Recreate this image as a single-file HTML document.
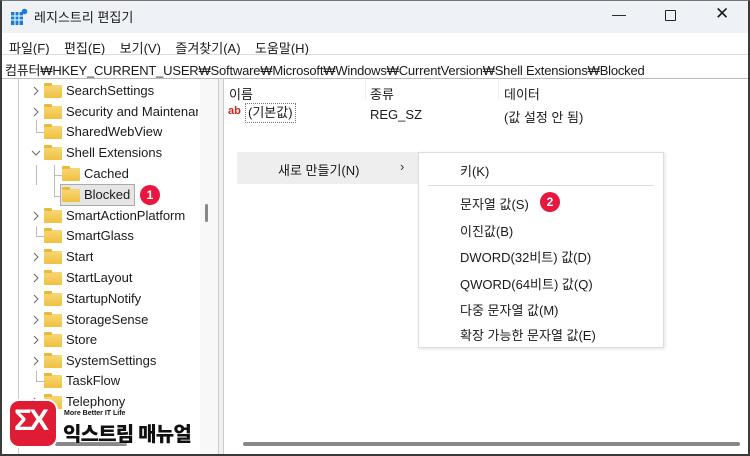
<!DOCTYPE html>
<html><head><meta charset="utf-8"><style>
*{margin:0;padding:0;box-sizing:border-box}
body{width:750px;height:456px;overflow:hidden;background:#fff;font-family:"Liberation Sans","Noto Sans CJK KR",sans-serif;font-size:13px;color:#1a1a1a;position:relative}
.abs{position:absolute;white-space:nowrap}
.win{position:absolute;left:0;top:0;width:750px;height:456px;border:2px solid #3a3a3a;border-top:1px solid #777;}
.title{position:absolute;left:0;top:0;width:750px;height:33px;background:#eef1f6}
.menu{position:absolute;left:0;top:33px;width:750px;height:22px;background:#fff;border-bottom:1px solid #ddd}
.addr{position:absolute;left:0;top:55px;width:750px;height:24px;background:#fff;border-bottom:1px solid #bbb}
.tree{position:absolute;left:2px;top:79px;width:216px;height:375px;background:#fff}
.vsb{position:absolute;left:200px;top:79px;width:18px;height:377px;background:#f8f8f8}
.split{position:absolute;left:218px;top:79px;width:6px;height:377px;background:#f0f0f0;border-left:1px solid #ccc;border-right:1px solid #ccc}
.row{position:absolute;height:20px;line-height:20px;font-size:13px;overflow:hidden}
.fold{position:absolute;width:18px;height:13px;background:linear-gradient(#f7d774,#f0c040);border-radius:1px}
.fold:before{content:"";position:absolute;left:0;top:-2px;width:8px;height:3px;background:#e9b93a;border-radius:1px 1px 0 0}
.chev{position:absolute;width:8px;height:10px}
.ctx{position:absolute;left:237px;top:152px;width:182px;height:32px;background:#eeeeee}
.sub{position:absolute;left:418px;top:152px;width:246px;height:196px;background:#fff;border:1px solid #ddd;box-shadow:1px 1px 3px rgba(0,0,0,.12)}
.badge{position:absolute;width:20px;height:20px;border-radius:10px;background:#e8173f;color:#fff;font-size:12px;font-weight:bold;text-align:center;line-height:20px}
</style></head><body>
<div class="title"></div>
<svg class="abs" style="left:10px;top:8px" width="18" height="18" viewBox="0 0 18 18"><rect x="1" y="4" width="12" height="13" fill="#1c7cd5"/><path d="M1 8h12M1 12h12M5 4v13M9 4v13" stroke="#fff" stroke-width="1"/><circle cx="14.5" cy="3.5" r="2.8" fill="#1c7cd5"/></svg>
<div class="abs" style="left:34px;top:7px;font-size:13px">레지스트리 편집기</div>
<div class="abs" style="left:612px;top:6px;font-size:14px">—</div>
<div class="abs" style="left:665px;top:10px;width:11px;height:11px;border:1.3px solid #222;border-radius:1px"></div>
<div class="abs" style="left:715px;top:4px;font-size:17px;font-weight:300">✕</div>
<div class="menu"></div>
<div class="abs" style="left:9px;top:38px">파일(F)&nbsp;&nbsp;&nbsp; 편집(E)&nbsp;&nbsp;&nbsp; 보기(V)&nbsp;&nbsp;&nbsp; 즐겨찾기(A)&nbsp;&nbsp;&nbsp; 도움말(H)</div>
<div class="addr"></div>
<div class="abs" style="left:5px;top:60px;letter-spacing:-0.2px">컴퓨터₩HKEY_CURRENT_USER₩Software₩Microsoft₩Windows₩CurrentVersion₩Shell Extensions₩Blocked</div>
<div class="tree"></div>
<div class="vsb"></div>
<div class="abs" style="left:205px;top:204px;width:3px;height:18px;background:#888;border-radius:2px"></div>
<div class="split"></div>
<div class="abs" style="left:18px;top:79px;width:1px;height:377px;background:#ccc"></div>
<div class="abs" style="left:36px;top:120px;width:1px;height:13px;background:#bbb"></div>
<div class="abs" style="left:36px;top:132px;width:8px;height:1px;background:#bbb"></div>
<div class="abs" style="left:36px;top:165px;width:1px;height:20px;background:#bbb"></div>
<div class="abs" style="left:54px;top:165px;width:1px;height:32px;background:#bbb"></div>
<div class="abs" style="left:54px;top:196px;width:8px;height:1px;background:#bbb"></div>
<div class="abs" style="left:54px;top:175px;width:8px;height:1px;background:#bbb"></div>
<div class="abs" style="left:36px;top:226px;width:1px;height:10px;background:#bbb"></div>
<div class="abs" style="left:36px;top:236px;width:8px;height:1px;background:#bbb"></div>
<div class="abs" style="left:36px;top:371px;width:1px;height:10px;background:#bbb"></div>
<div class="abs" style="left:36px;top:381px;width:8px;height:1px;background:#bbb"></div>

<svg width="0" height="0" style="position:absolute"><defs><path id="r" d="M2 1l4 4-4 4" fill="none" stroke="#666" stroke-width="1"/></defs></svg>
<div class="abs" style="left:0;top:0">
<svg class="chev" style="left:32px;top:86px"><use href="#r"/></svg><div class="fold" style="left:44px;top:85px"></div><div class="row" style="left:66px;top:81px">SearchSettings</div>
<svg class="chev" style="left:32px;top:107px"><use href="#r"/></svg><div class="fold" style="left:44px;top:106px"></div><div class="row" style="left:66px;top:102px;width:132px">Security and Maintenance</div>
<div class="fold" style="left:44px;top:126px"></div><div class="row" style="left:66px;top:122px">SharedWebView</div>
<svg class="abs" style="left:31px;top:149px" width="10" height="8"><path d="M1 2l4 4 4-4" fill="none" stroke="#666"/></svg><div class="fold" style="left:44px;top:147px"></div><div class="row" style="left:66px;top:143px">Shell Extensions</div>
<div class="fold" style="left:62px;top:168px"></div><div class="row" style="left:84px;top:164px">Cached</div>
<div class="abs" style="left:60px;top:184px;width:75px;height:22px;background:#e5e5e5;border:1px solid #aaa"></div>
<div class="fold" style="left:62px;top:189px"></div><div class="row" style="left:84px;top:185px">Blocked</div>
<svg class="chev" style="left:32px;top:211px"><use href="#r"/></svg><div class="fold" style="left:44px;top:210px"></div><div class="row" style="left:66px;top:206px">SmartActionPlatform</div>
<div class="fold" style="left:44px;top:230px"></div><div class="row" style="left:66px;top:226px">SmartGlass</div>
<svg class="chev" style="left:32px;top:252px"><use href="#r"/></svg><div class="fold" style="left:44px;top:251px"></div><div class="row" style="left:66px;top:247px">Start</div>
<svg class="chev" style="left:32px;top:273px"><use href="#r"/></svg><div class="fold" style="left:44px;top:272px"></div><div class="row" style="left:66px;top:268px">StartLayout</div>
<svg class="chev" style="left:32px;top:294px"><use href="#r"/></svg><div class="fold" style="left:44px;top:293px"></div><div class="row" style="left:66px;top:289px">StartupNotify</div>
<svg class="chev" style="left:32px;top:315px"><use href="#r"/></svg><div class="fold" style="left:44px;top:314px"></div><div class="row" style="left:66px;top:310px">StorageSense</div>
<svg class="chev" style="left:32px;top:335px"><use href="#r"/></svg><div class="fold" style="left:44px;top:334px"></div><div class="row" style="left:66px;top:330px">Store</div>
<svg class="chev" style="left:32px;top:356px"><use href="#r"/></svg><div class="fold" style="left:44px;top:355px"></div><div class="row" style="left:66px;top:351px">SystemSettings</div>
<div class="fold" style="left:44px;top:375px"></div><div class="row" style="left:66px;top:371px">TaskFlow</div>
<svg class="chev" style="left:32px;top:397px"><use href="#r"/></svg><div class="fold" style="left:44px;top:396px"></div><div class="row" style="left:66px;top:392px">Telephony</div>
</div>
<div class="badge" style="left:140px;top:185px">1</div>

<div class="abs" style="left:55px;top:442px;width:72px;height:4px;background:#888;border-radius:2px"></div>
<div class="abs" style="left:243px;top:442px;width:497px;height:4px;background:#888;border-radius:2px"></div>

<div class="abs" style="left:229px;top:84px">이름</div>
<div class="abs" style="left:365px;top:80px;width:1px;height:20px;background:#eee"></div>
<div class="abs" style="left:370px;top:84px">종류</div>
<div class="abs" style="left:498px;top:80px;width:1px;height:20px;background:#eee"></div>
<div class="abs" style="left:504px;top:84px">데이터</div>
<div class="abs" style="left:228px;top:105px;color:#c8281e;font-size:11px;font-weight:bold">ab</div>
<div class="abs" style="left:245px;top:103px;border:1px dotted #777;padding:0 2px;height:20px;line-height:18px">(기본값)</div>
<div class="abs" style="left:370px;top:107px">REG_SZ</div>
<div class="abs" style="left:504px;top:107px">(값 설정 안 됨)</div>

<div class="ctx"></div>
<div class="abs" style="left:278px;top:160px">새로 만들기(N)</div>
<div class="abs" style="left:400px;top:159px;color:#333">›</div>
<div class="sub"></div>
<div class="abs" style="left:460px;top:161px">키(K)</div>
<div class="abs" style="left:428px;top:185px;width:226px;height:1px;background:#ddd"></div>
<div class="abs" style="left:460px;top:194px">문자열 값(S)</div>
<div class="badge" style="left:540px;top:192px">2</div>
<div class="abs" style="left:460px;top:221px">이진값(B)</div>
<div class="abs" style="left:460px;top:247px">DWORD(32비트) 값(D)</div>
<div class="abs" style="left:460px;top:274px">QWORD(64비트) 값(Q)</div>
<div class="abs" style="left:460px;top:300px">다중 문자열 값(M)</div>
<div class="abs" style="left:460px;top:325px">확장 가능한 문자열 값(E)</div>

<div class="win"></div>

<div class="abs" style="left:10px;top:401px;width:46px;height:45px;background:#e01b34;border-radius:9px;box-shadow:0 0 0 2px #fff"></div>
<div class="abs" style="left:14px;top:404px;color:#fff;font-size:30px;font-weight:bold;letter-spacing:-3px">ΣX</div>
<div class="abs" style="left:64px;top:410px;font-size:7px;font-weight:bold;color:#111;text-shadow:0 0 2px #fff">More Better IT Life</div>
<div class="abs" style="left:63px;top:418px;font-size:20px;font-weight:900;color:#111;letter-spacing:-0.8px;text-shadow:0 0 2px #fff">익스트림 매뉴얼</div>
</body></html>
